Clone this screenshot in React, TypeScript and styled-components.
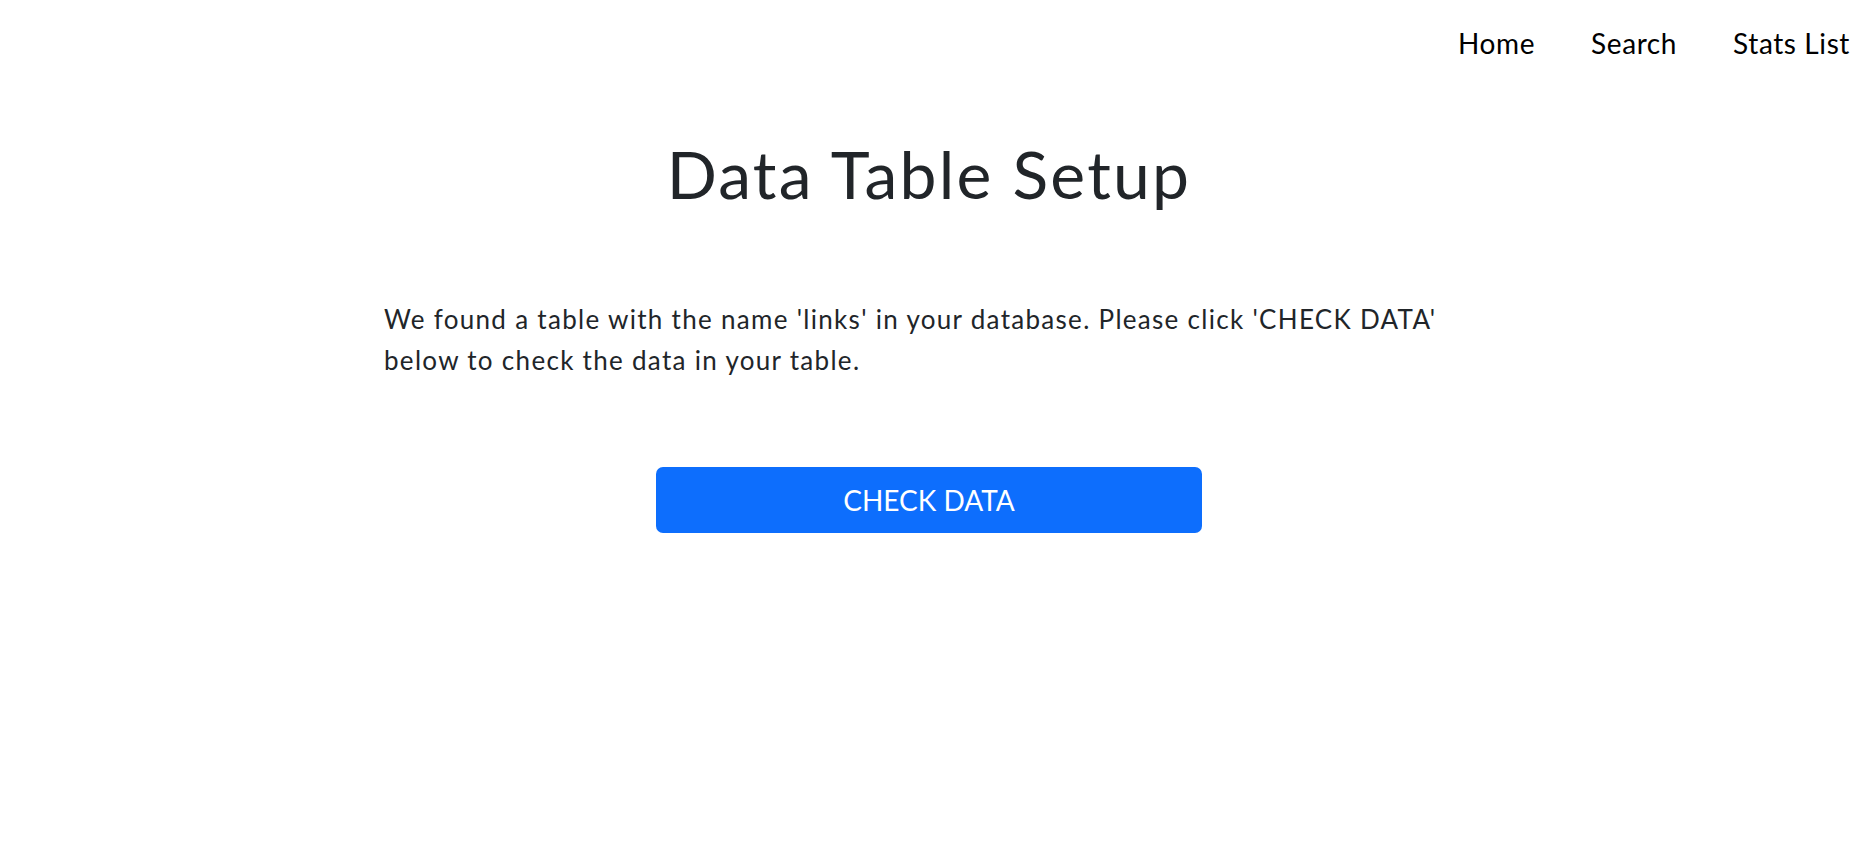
import React from 'react';
import styled, { createGlobalStyle } from 'styled-components';

const GlobalStyle = createGlobalStyle`
    * {
        box-sizing: border-box;
    }
    body {
        margin: 0;
        background: #fff;
        font-family: Lato, "Noto Sans", sans-serif;
        color: #212529;
    }
`;

const NavBar = styled.nav`
    display: flex;
    justify-content: flex-end;
    gap: 56px;
    padding: 23px 8px 0 0;
    height: 80px;
`;

const NavLink = styled.a`
    font-size: 28px;
    line-height: 40px;
    letter-spacing: 0.6px;
    color: #000;
    text-decoration: none;
    cursor: pointer;
`;

const Container = styled.main`
    width: 1090px;
    margin: 0 auto;
    display: flex;
    flex-direction: column;
`;

const Title = styled.h1`
    margin: 54px 0 0;
    font-size: 66px;
    font-weight: 400;
    letter-spacing: 2.2px;
    line-height: 80px;
    text-align: center;
    color: #212529;
`;

const Lead = styled.p`
    margin: 85px 0 0;
    font-size: 26px;
    line-height: 41px;
    letter-spacing: 1.3px;
    color: #212529;
`;

const ButtonRow = styled.div`
    display: flex;
    justify-content: center;
    margin-top: 86px;
`;

const PrimaryButton = styled.button`
    width: 546px;
    height: 66px;
    border: none;
    border-radius: 7px;
    background: #0d6efd;
    color: #fff;
    font-family: Lato, "Noto Sans", sans-serif;
    font-size: 28px;
    cursor: pointer;
`;

const App: React.FC = () => {
    return (
        <>
            <GlobalStyle />
            <NavBar>
                <NavLink>Home</NavLink>
                <NavLink>Search</NavLink>
                <NavLink>Stats List</NavLink>
            </NavBar>
            <Container>
                <Title>Data Table Setup</Title>
                <Lead>
                    We found a table with the name 'links' in your database. Please click 'CHECK DATA' below to check
                    the data in your table.
                </Lead>
                <ButtonRow>
                    <PrimaryButton>CHECK DATA</PrimaryButton>
                </ButtonRow>
            </Container>
        </>
    );
};

export default App;
